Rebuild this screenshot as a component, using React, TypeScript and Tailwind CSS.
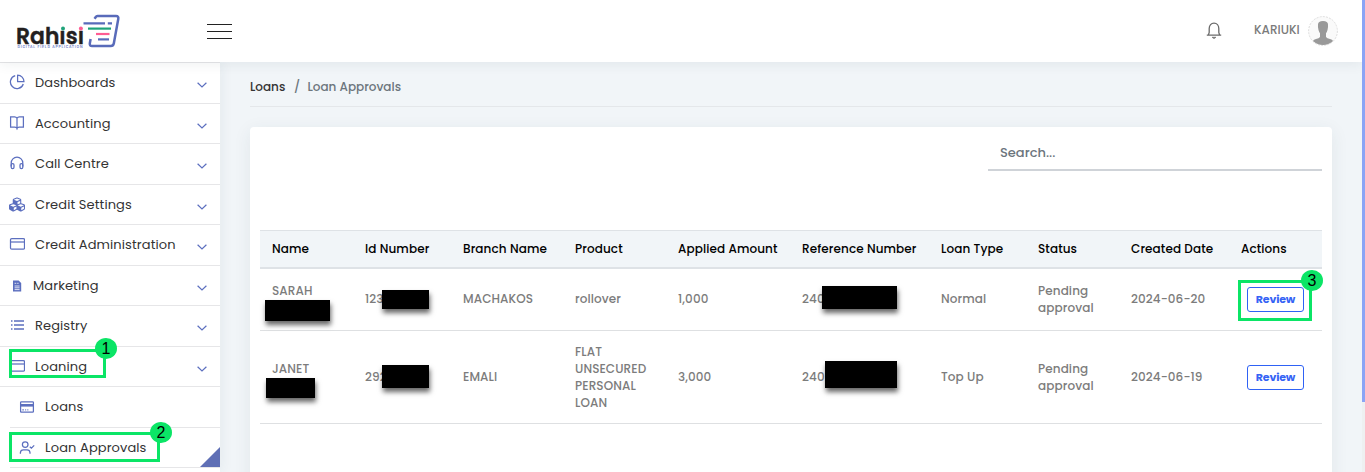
import type { ReactNode } from 'react';
import { FaCubes } from 'react-icons/fa';

function Stroke({ children, className = 'size-4' }: { children: ReactNode; className?: string }) {
  return (
    <svg viewBox="0 0 16 16" fill="none" stroke="currentColor" strokeWidth="1.25" className={className}>
      {children}
    </svg>
  );
}

const PieIcon = () => (
  <Stroke>
    <path d="M6.2 1.6A6.6 6.6 0 1 0 14.3 10" />
    <path d="M8.6 1.1V7.7H15A6.5 6.5 0 0 0 8.6 1.1Z" strokeLinejoin="round" />
  </Stroke>
);
const BookIcon = () => (
  <Stroke>
    <path d="M8 3.2C7.4 2.3 6.6 1.9 5.6 1.9H1.6V12.1H5.8C7 12.1 7.7 12.6 8 13.4C8.3 12.6 9 12.1 10.2 12.1H14.4V1.9H10.4C9.4 1.9 8.6 2.3 8 3.2ZM8 3.2V14.4" />
  </Stroke>
);
const HeadphonesIcon = () => (
  <Stroke>
    <path d="M2.2 11.5V8A5.8 5.8 0 0 1 13.8 8V11.5" />
    <rect x="2.2" y="8.6" width="2.8" height="5" rx="1.3" />
    <rect x="11" y="8.6" width="2.8" height="5" rx="1.3" />
  </Stroke>
);
const CardIcon = () => (
  <Stroke>
    <rect x="1.5" y="2.5" width="14" height="10.6" rx="1.2" />
    <path d="M1.5 6H15.5" />
  </Stroke>
);
const FileIcon = () => (
  <svg viewBox="0 0 10 12" className="mr-px h-3 w-[10px]">
    <path d="M1 .4H6.6L9.2 3V11.6H1Z" fill="currentColor" />
    <path d="M2.6 3.3H4.3M5.2 3.3H6.6M2.6 6H7.6M2.6 7.8H7.6M2.6 9.6H7.6" stroke="#fff" strokeWidth=".8" />
  </svg>
);
const ListIcon = () => (
  <Stroke>
    <path d="M5 4H15M5 8H15M5 12H15M2 4H3.5M2 8H3.5M2 12H3.5" strokeWidth="1.4" />
  </Stroke>
);
const LoansIcon = () => (
  <Stroke>
    <rect x="1.6" y="2.8" width="12.8" height="10.4" rx=".8" />
    <path d="M1.5 6.3H14.5" strokeWidth="2.6" />
    <path d="M3.2 10.9H5M6 10.9H7.2M8.2 10.9H9.4" strokeWidth="1" />
  </Stroke>
);
const UserCheckIcon = () => (
  <Stroke>
    <circle cx="6.2" cy="4.6" r="2.8" />
    <path d="M1.4 13.8V12.6A3 3 0 0 1 4.4 9.8H8A3 3 0 0 1 11 12.6V13.8M10.8 6.8L12.4 8.2L15.2 5.4" />
  </Stroke>
);
const Chevron = () => (
  <svg viewBox="0 0 10 6" fill="none" stroke="#5c6fbf" strokeWidth="1.2" className="mt-1 h-[6px] w-[10px]">
    <path d="M.6 .7L5 5L9.4 .7" />
  </svg>
);

type Item = { label: string; icon: ReactNode; height: string; text: string; step?: number };

const items: Item[] = [
  { label: 'Dashboards', icon: <PieIcon />, height: 'h-[41px]', text: 'ml-[10px]' },
  { label: 'Accounting', icon: <BookIcon />, height: 'h-[40px]', text: 'mt-px ml-[10px]' },
  { label: 'Call Centre', icon: <HeadphonesIcon />, height: 'h-[41px]', text: 'ml-[10px]' },
  { label: 'Credit Settings', icon: <FaCubes className="mt-px size-[17px]" />, height: 'h-[40px]', text: 'mt-px ml-[10px]' },
  { label: 'Credit Administration', icon: <CardIcon />, height: 'h-[41px]', text: 'ml-[10px]' },
  { label: 'Marketing', icon: <span className="mt-[2px]"><FileIcon /></span>, height: 'h-[40px]', text: 'mt-px ml-[8px]' },
  { label: 'Registry', icon: <ListIcon />, height: 'h-[41px]', text: 'ml-[10px]' },
  { label: 'Loaning', icon: <CardIcon />, height: 'h-[40px]', text: 'mt-px ml-[10px]', step: 1 },
];

function Step({ n, className }: { n: number; className: string }) {
  return (
    <span className={`absolute z-10 flex h-[21px] w-[22px] items-center justify-center rounded-[50%] bg-[#0be566] font-['Liberation_Sans'] text-[16px] leading-none font-normal tracking-normal text-black ${className}`}>
      {n}
    </span>
  );
}

function Logo() {
  return (
    <svg viewBox="0 0 106 38" className="ml-[15px] h-[38px] w-[106px] overflow-visible">
      <text x="1" y="31.7" fontFamily="Poppins, Inter, sans-serif" fontWeight="600" fontSize="23.5" fill="#231f20" stroke="#231f20" strokeWidth=".4" textLength="68" lengthAdjust="spacingAndGlyphs">
        Rahısı
      </text>
      <circle cx="48" cy="16.5" r="2" fill="#1fa37a" />
      <circle cx="65.900" cy="16.5" r="2" fill="#ff5c93" />
      <text x="2.5" y="36" fontFamily="Inter, sans-serif" fontWeight="600" fontSize="3.4" fill="#6878c4" textLength="65" lengthAdjust="spacing">
        DIGITAL FIELD APPLICATION
      </text>
      <g fill="none" strokeWidth="2.2">
        <path d="M79.5 6.8L80.8 5Q81.3 4 82.5 4H101Q103.8 4 103.3 6.8L98.8 31.5Q98.3 34 95.8 34H77Q74.5 34 74.8 31.5L75.6 27" stroke="#596bba" strokeWidth="2.5" />
        <path d="M68.5 11.4H90M92.8 11.4H97" stroke="#596bba" />
        <path d="M73 16.6H96" stroke="#1fa37a" />
        <path d="M81 22H94.5" stroke="#ff5c93" />
        <path d="M83 27.4H94" stroke="#596bba" />
      </g>
    </svg>
  );
}

function Header() {
  return (
    <header className="relative z-20 flex h-[62px] shrink-0 items-center bg-white shadow-[0_2px_12px_rgba(40,60,80,0.08)]">
      <Logo />
      <button className="ml-[86px] flex w-[25px] flex-col gap-[6px]" aria-label="Menu">
        <span className="h-px w-full bg-[#222]" />
        <span className="h-px w-full bg-[#222]" />
        <span className="h-px w-full bg-[#222]" />
      </button>
      <svg viewBox="0 0 16 18" fill="none" stroke="#6b6b6b" strokeWidth="1.3" className="ml-auto h-[18px] w-4">
        <path d="M.8 13.2H15.2M2.4 13L3.2 10.5V6.6C3.2 3.3 5.2 1.2 8 1.2S12.8 3.3 12.8 6.6V10.5L13.6 13" />
        <path d="M6 15.2Q8 18 10 15.2Z" fill="#6b6b6b" strokeWidth=".5" />
      </svg>
      <span className="ml-8 w-[46px] pb-[2px] text-[12px] font-medium text-[#7b7b7b]">KARIUKI</span>
      <svg viewBox="0 0 30 30" className="mr-[24px] ml-2 size-[30px]">
        <circle cx="15" cy="15" r="14.4" fill="#fafafa" stroke="#ddd" strokeDasharray="2 1.2" />
        <path d="M10 8.5Q10 5 15 5T20 8.5Q20.3 11 19.5 14Q18.8 16.5 18 17.3V21Q19 22.5 22 23Q24.5 23.5 25 25Q20.5 29 15 29T5 25Q5.5 23.5 8 23Q11 22.5 12 21V17.3Q11.2 16.5 10.5 14Q9.7 11 10 8.5Z" fill="#999" />
      </svg>
    </header>
  );
}

function Sidebar() {
  return (
    <nav className="relative z-10 w-[220px] shrink-0 bg-white text-[13px] tracking-[0.1px] text-[#333] shadow-[2px_0_12px_rgba(40,60,80,0.06)]">
      {items.map((item) => (
        <div key={item.label} className={`relative flex items-center border-t border-[#e6e6e8] pr-[13px] pl-[9px] ${item.height}`}>
          <span className="mb-[2px] flex w-4 justify-center text-[#5c6fbf]">{item.icon}</span>
          <span className={item.text}>{item.label}</span>
          <span className="ml-auto">
            <Chevron />
          </span>
          {item.step && (
            <span className="absolute top-[2px] left-[9px] h-[29px] w-[97px] border-[3px] border-[#0be566]">
              <Step n={1} className="top-[-14px] left-[83px]" />
            </span>
          )}
        </div>
      ))}
      <div className="flex h-[41px] items-center border-t border-[#e6e6e8] pl-[19px]">
        <span className="text-[#5c6fbf]">
          <LoansIcon />
        </span>
        <span className="ml-[10px]">Loans</span>
      </div>
      <div className="relative ml-[10px] flex h-[40px] items-center border-t border-[#e6e6e8] pl-[9px]">
        <span className="text-[#5c6fbf]">
          <UserCheckIcon />
        </span>
        <span className="mt-px ml-[10px]">Loan Approvals</span>
        <svg viewBox="0 0 20 20" className="ml-auto size-5 self-end">
          <path d="M20 0V20H0Z" fill="#5f6fb5" />
        </svg>
        <span className="absolute top-[4px] left-[-1px] h-[30px] w-[151px] border-[3px] border-[#0be566]">
          <Step n={2} className="top-[-13px] left-[138px]" />
        </span>
      </div>
      <div className="ml-[10px] border-t border-[#e6e6e8]" />
    </nav>
  );
}

function Redaction({ className }: { className: string }) {
  return <span className={`absolute bg-black shadow-[1px_4px_5px_rgba(0,0,0,0.6)] ${className}`} />;
}

const columns = [
  { label: 'Name', w: 'w-[93px]' },
  { label: 'Id Number', w: 'w-[98px]' },
  { label: 'Branch Name', w: 'w-[112px]' },
  { label: 'Product', w: 'w-[103px]' },
  { label: 'Applied Amount', w: 'w-[124px]' },
  { label: 'Reference Number', w: 'w-[139px]' },
  { label: 'Loan Type', w: 'w-[97px]' },
  { label: 'Status', w: 'w-[93px]' },
  { label: 'Created Date', w: 'w-[110px]' },
  { label: 'Actions', w: 'w-[93px]' },
];

type Loan = {
  height: string;
  pad: string;
  cells: ReactNode[];
  step?: number;
};

const pending = <>Pending<br />approval</>;

const loans: Loan[] = [
  {
    height: 'h-[62px]',
    pad: 'pb-[2px]',
    cells: [
      <>SARAH<br />&nbsp;<Redaction className="top-[31px] left-[5px] h-[21px] w-[65px]" /></>,
      <>123<Redaction className="top-[21px] left-[29px] h-[19px] w-[47px]" /></>,
      'MACHAKOS',
      'rollover',
      '1,000',
      <>240<Redaction className="top-[17px] left-[32px] h-[23px] w-[75px]" /></>,
      'Normal',
      pending,
      '2024-06-20',
    ],
    step: 3,
  },
  {
    height: 'h-[93px]',
    pad: 'pb-px',
    cells: [
      <>JANET<br />&nbsp;<Redaction className="top-[47px] left-[6px] h-[20px] w-[49px]" /></>,
      <>292<Redaction className="top-[34px] left-[29px] h-[23px] w-[47px]" /></>,
      'EMALI',
      <>FLAT<br />UNSECURED<br />PERSONAL<br />LOAN</>,
      '3,000',
      <>240<Redaction className="top-[30px] left-[35px] h-[27px] w-[72px]" /></>,
      'Top Up',
      pending,
      '2024-06-19',
    ],
  },
];

function LoanTable() {
  return (
    <div className="mx-[10px] mt-[59px] text-[12px] font-medium tracking-[0.1px]">
      <div className="flex h-[39px] items-center border-t border-b-2 border-t-[#dee2e6] border-b-[#dee2e6] bg-[#f1f5f8] text-black">
        {columns.map((c) => (
          <div key={c.label} className={`shrink-0 pl-3 whitespace-nowrap ${c.w}`}>{c.label}</div>
        ))}
      </div>
      {loans.map((loan, n) => (
        <div key={n} className={`flex border-b border-[#dee0e2] leading-[17px] text-[#7c7c7c] ${loan.height}`}>
          {loan.cells.map((cell, i) => (
            <div key={i} className={`relative flex shrink-0 items-center pl-3 ${columns[i].w}`}>
              <div className={loan.pad}>{cell}</div>
            </div>
          ))}
          <div className="relative flex w-[93px] shrink-0 items-center pl-[18px]">
            <button className="flex h-[25px] w-[57px] items-center justify-center rounded-[3px] border border-[#2f62f5] text-[11px] font-bold tracking-[-0.15px] text-[#3563f5]">
              Review
            </button>
            {loan.step && (
              <span className="absolute top-[11px] left-[9px] h-[41px] w-[74px] border-[3px] border-[#0be566]">
                <Step n={3} className="top-[-13px] left-[60px]" />
              </span>
            )}
          </div>
        </div>
      ))}
    </div>
  );
}

export default function App() {
  return (
    <div className="flex h-[472px] w-[1365px] overflow-hidden bg-[#f1f5f8] font-['Poppins','Inter',sans-serif] [font-feature-settings:'cv11']">
      <div className="flex min-w-0 flex-1 flex-col">
        <Header />
        <div className="flex min-h-0 flex-1">
          <Sidebar />
          <main className="ml-[30px] flex w-[1082px] flex-col">
            <div className="flex h-[45px] shrink-0 items-center border-b border-[#e4e7ea] pt-[6px] text-[12px] font-medium">
              <span className="w-[35px] text-[#333]">Loans</span>
              <span className="ml-[9px] w-[13.5px] text-[#6c757d]">/</span>
              <span className="text-[#6c757d]">Loan Approvals</span>
            </div>
            <section className="mt-5 h-[400px] shrink-0 rounded-[4px] bg-white shadow-[0_4px_18px_rgba(40,60,80,0.08)]">
              <div className="mr-[10px] ml-auto flex h-[44px] w-[334px] items-center border-b-2 border-[#cfd3d8] pt-[10px] pl-3 text-[13px] font-medium text-[#6c757d]">
                Search...
              </div>
              <LoanTable />
            </section>
          </main>
        </div>
      </div>
      <div className="z-30 w-[3px] bg-[#eef0f1]">
        <div className="h-[402px] bg-[#8ba4f5]" />
      </div>
    </div>
  );
}
